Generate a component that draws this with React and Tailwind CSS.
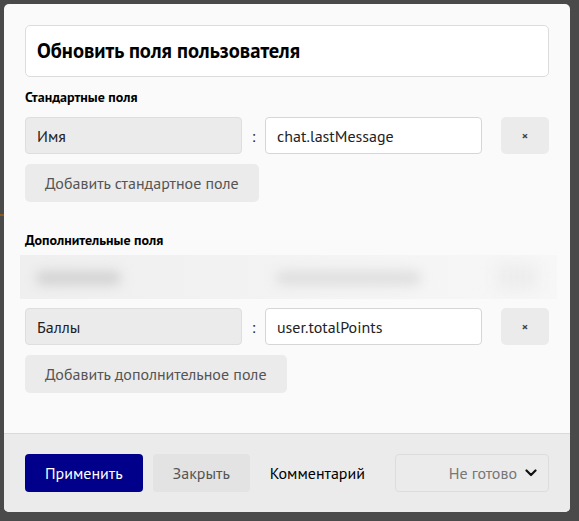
import React from 'react';

const font = { fontFamily: '"PT Sans", "Noto Sans", "Open Sans", sans-serif' };

const FieldRow = ({ label, value }) => (
  <div className="flex items-center h-[37px]">
    <div className="w-[217px] h-full flex items-center px-[11px] bg-[#ebebeb] border border-[#dedede] rounded-[4px] text-[16px] text-[#222]">
      {label}
    </div>
    <div className="w-[23px] text-center text-[16px] text-[#222]">:</div>
    <div className="w-[217px] h-full flex items-center px-[11px] bg-white border border-[#d6d6d6] rounded-[4px] text-[16px] text-[#222]">
      {value}
    </div>
    <button className="ml-auto w-[48px] h-full rounded-[5px] bg-[#ebebeb] text-[12px] font-bold text-[#444] flex items-center justify-center">
      ×
    </button>
  </div>
);

export default function App() {
  return (
    <div className="w-[579px] h-[521px] bg-[#4a4a4a] pl-[4px] pt-[4px] pr-[9px] pb-[9px] relative" style={font}>
      <div className="absolute left-0 top-[214px] w-[4px] h-[2px] bg-[#8a5a1c]" />
      <div className="h-full bg-[#fafafa] rounded-[5px] flex flex-col overflow-hidden">
        <div className="flex-1 px-[21px] pt-[21px]">
          <div className="h-[52px] bg-white border border-[#dcdcdc] rounded-[5px] flex items-center px-[11px]">
            <h1 className="text-[20.6px] font-bold text-black">Обновить поля пользователя</h1>
          </div>
          <h2 className="mt-[10px] text-[14px] font-bold text-black leading-[20px]">Стандартные поля</h2>
          <div className="mt-[10px]">
            <FieldRow label="Имя" value="chat.lastMessage" />
          </div>
          <button className="mt-[10px] h-[38px] px-[20px] rounded-[5px] bg-[#ebebeb] text-[16px] text-[#555]">
            Добавить стандартное поле
          </button>
          <h2 className="mt-[28px] text-[14px] font-bold text-black leading-[20px]">Дополнительные поля</h2>
          <div className="mt-[5px] -ml-[5px] -mr-[8px] h-[44px] bg-gradient-to-r from-[#efefef] via-[#f3f3f3] to-[#f7f7f7] relative overflow-hidden">
            <div className="absolute left-[16px] top-[16px] w-[85px] h-[14px] rounded-full bg-[#d2d2d2] blur-[6px]" />
            <div className="absolute left-[256px] top-[16px] w-[145px] h-[14px] rounded-full bg-[#dedede] blur-[6px]" />
            <div className="absolute right-[20px] top-[10px] w-[40px] h-[24px] rounded bg-[#ececec] blur-[8px]" />
          </div>
          <div className="mt-[9px]">
            <FieldRow label="Баллы" value="user.totalPoints" />
          </div>
          <button className="mt-[10px] h-[38px] px-[20px] rounded-[5px] bg-[#ebebeb] text-[16px] text-[#555]">
            Добавить дополнительное поле
          </button>
        </div>
        <div className="h-[79px] border-t border-[#dadada] bg-[#ebebeb] flex items-center px-[21px]">
          <button className="h-[38px] px-[20px] rounded-[4px] bg-[#00008b] text-white text-[16px]">Применить</button>
          <button className="ml-[10px] h-[38px] px-[20px] rounded-[4px] bg-[#e3e3e3] text-[16px] text-[#555]">Закрыть</button>
          <span className="ml-[20px] text-[16px] text-black">Комментарий</span>
          <div className="ml-auto w-[154px] h-[38px] rounded-[4px] border border-[#dcdcdc] flex items-center justify-end pr-[11px] gap-[8px]">
            <span className="text-[16px] text-[#777]">Не готово</span>
            <svg width="12" height="8" viewBox="0 0 12 8" fill="none" className="text-[#111]">
              <path d="M1.5 1.5 L6 6 L10.5 1.5" stroke="currentColor" strokeWidth="2.2" strokeLinecap="round" strokeLinejoin="round" />
            </svg>
          </div>
        </div>
      </div>
    </div>
  );
}
